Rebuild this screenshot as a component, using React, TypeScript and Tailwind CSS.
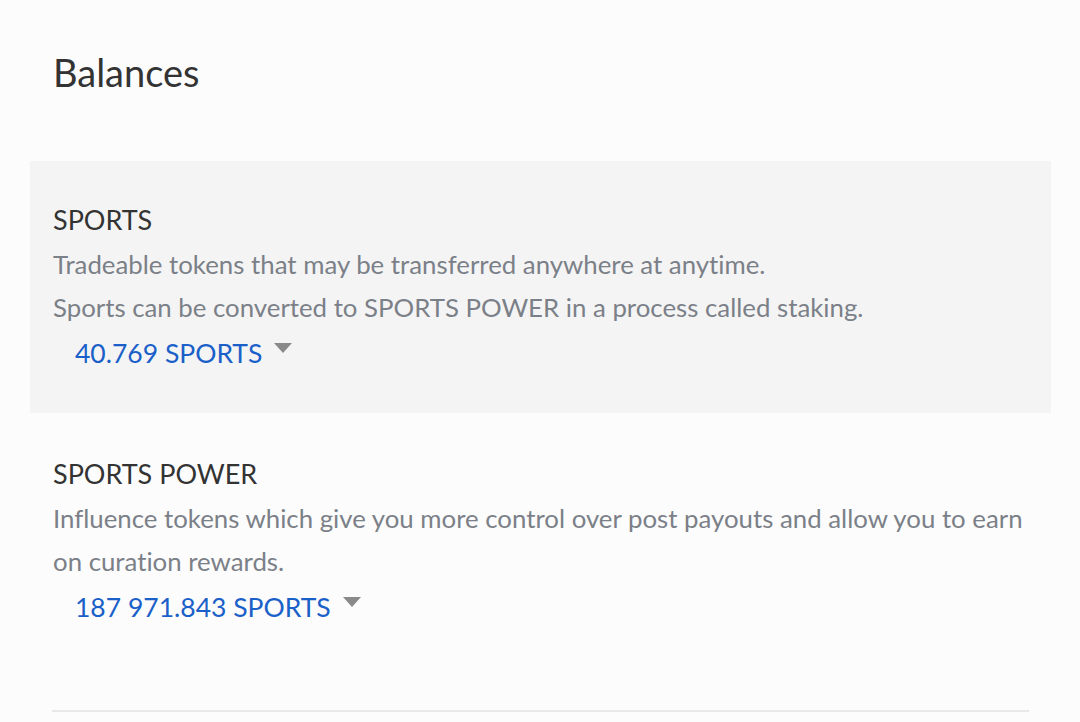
import React from 'react';

interface BalanceProps {
  title: string;
  lines: string[];
  amount: string;
  shaded?: boolean;
}

const Caret = () => (
  <svg width="18" height="10" viewBox="0 0 18 10" className="ml-[12px] -translate-y-[5px]">
    <path d="M0 0h18L9 10z" fill="#8a8a8a" />
  </svg>
);

const BalanceRow: React.FC<BalanceProps> = ({ title, lines, amount, shaded }) => (
  <div className={shaded ? 'bg-[#f4f4f4] px-[23px] pt-[41px] pb-[42px]' : 'px-[23px] pt-[43px]'}>
    <div className="text-[27px] leading-[36px] text-[#333333]">{title}</div>
    <div className="mt-[5px] whitespace-nowrap text-[25.8px] leading-[43px] text-[#7b8088]">
      {lines.map((l, i) => (
        <div key={i}>{l}</div>
      ))}
    </div>
    <div className="mt-[6px] flex items-center pl-[22px] text-[26.5px] leading-[36px] text-[#1a60c8]">
      <span>{amount}</span>
      <Caret />
    </div>
  </div>
);

export default function App() {
  return (
    <div
      className="min-h-screen bg-[#fcfcfc] pl-[30px] pr-[29px] pt-[48px] [font-variant-ligatures:none]"
      style={{ fontFamily: 'Lato, sans-serif' }}
    >
      <h1 className="pl-[23px] text-[38px] leading-[48px] text-[#333333]">Balances</h1>
      <div className="mt-[65px]">
        <BalanceRow
          shaded
          title="SPORTS"
          lines={[
            'Tradeable tokens that may be transferred anywhere at anytime.',
            'Sports can be converted to SPORTS POWER in a process called staking.',
          ]}
          amount="40.769 SPORTS"
        />
        <BalanceRow
          title="SPORTS POWER"
          lines={[
            'Influence tokens which give you more control over post payouts and allow you to earn',
            'on curation rewards.',
          ]}
          amount="187 971.843 SPORTS"
        />
        <div className="ml-[22px] mr-[22px] mt-[85px] h-[2px] bg-[#e8e8e8]" />
      </div>
    </div>
  );
}
